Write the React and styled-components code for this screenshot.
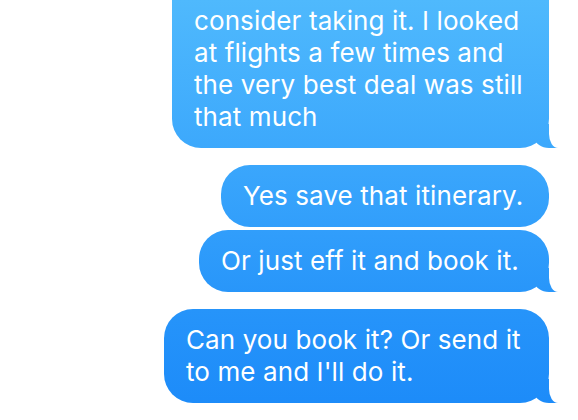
import styled, { createGlobalStyle } from 'styled-components'

const GlobalStyle = createGlobalStyle`
  html, body {
    margin: 0;
    padding: 0;
    background: #ffffff;
    overflow: hidden;
  }
  body {
    font-family: Inter, 'Noto Sans', sans-serif;
  }
`

const messages = [
  {
    id: 1,
    lines: ['consider taking it. I looked', 'at flights a few times and', 'the very best deal was still', 'that much'],
    width: 377,
    tail: true,
    clipped: true,
  },
  { id: 2, lines: ['Yes save that itinerary.'], width: 328, tail: false, gap: 17 },
  { id: 3, lines: ['Or just eff it and book it.'], width: 350, tail: true, gap: 3 },
  { id: 4, lines: ["Can you book it? Or send it", "to me and I'll do it."], width: 385, tail: true, gap: 17 },
]

const App = () => {
  return (
    <>
      <GlobalStyle />
      <Screen>
        <Thread>
          {messages.map(m => (
            <Bubble key={m.id} $width={m.width} $tail={m.tail} $clipped={m.clipped} $gap={m.gap || 0}>
              {m.lines.map((line, i) => (
                <Line key={i}>{line}</Line>
              ))}
            </Bubble>
          ))}
        </Thread>
      </Screen>
    </>
  )
}

export default App

const blue = 'linear-gradient(to bottom, #4fb9fd 0px, #3ba7fc 160px, #2795fa 300px, #1b8af9 420px) fixed'

const Screen = styled.div`
  width: 578px;
  height: 420px;
  overflow: hidden;
  background: #ffffff;
`

const Thread = styled.div`
  display: flex;
  flex-direction: column;
  align-items: flex-end;
  padding-right: 29px;
  margin-top: -10px;
`

const Bubble = styled.div`
  position: relative;
  box-sizing: border-box;
  width: ${p => p.$width}px;
  margin-top: ${p => p.$gap}px;
  padding: 15px 20px 15px 22px;
  border-radius: 29px;
  ${p => p.$clipped && 'border-top-left-radius: 0; border-top-right-radius: 0;'}
  background: ${blue};
  color: #ffffff;
  font-size: 26px;
  line-height: 32px;
  letter-spacing: 0.1px;

  &::before {
    content: '';
    display: ${p => (p.$tail ? 'block' : 'none')};
    position: absolute;
    right: -9px;
    bottom: 0;
    width: 23px;
    height: 24px;
    background: ${blue};
    border-bottom-left-radius: 14px 10px;
    z-index: 0;
  }

  &::after {
    content: '';
    display: ${p => (p.$tail ? 'block' : 'none')};
    position: absolute;
    right: -20px;
    bottom: 0;
    width: 20px;
    height: 26px;
    background: #ffffff;
    border-bottom-left-radius: 9px 14px;
    z-index: 1;
  }
`

const Line = styled.div`
  position: relative;
  z-index: 2;
  white-space: nowrap;
`
